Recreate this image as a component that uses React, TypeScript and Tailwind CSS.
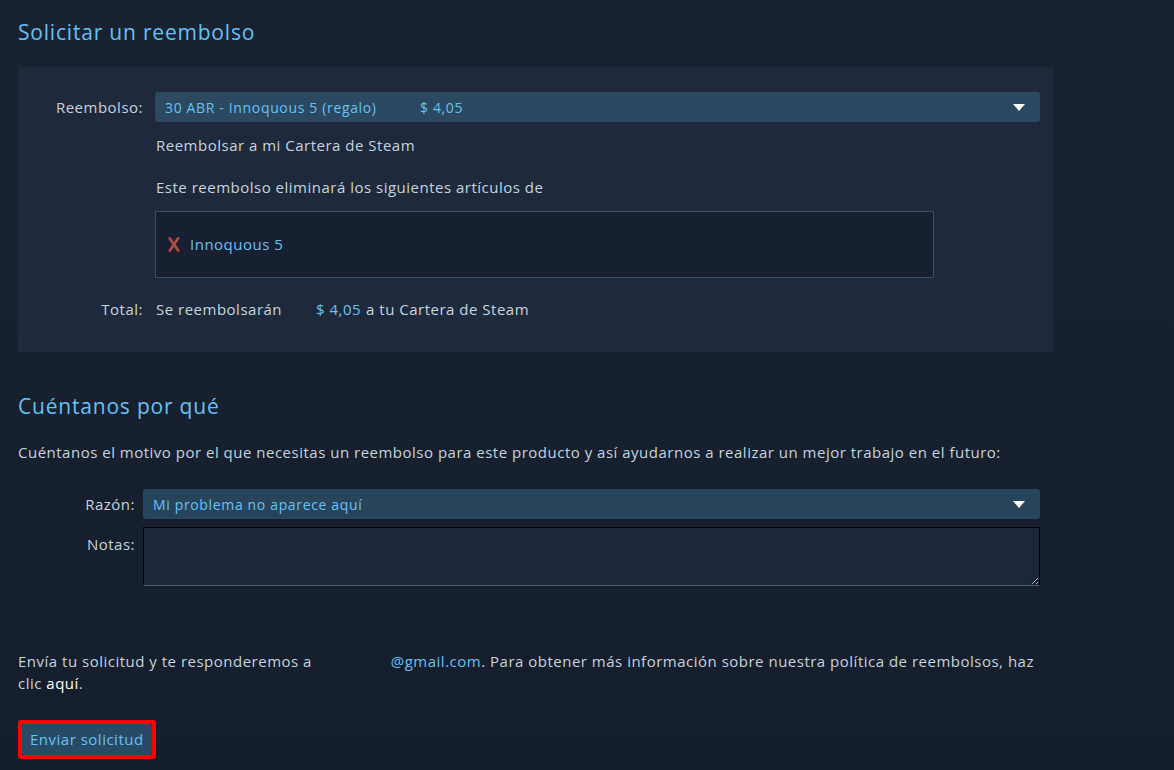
import { useState } from "react";

const FONT = "font-['Open_Sans',Arial,sans-serif]";

function Flecha() {
  return (
    <svg width="14" height="9" viewBox="0 0 14 9" className="shrink-0">
      <path d="M1 1 L13 1 L7 8 Z" fill="#ffffff" />
    </svg>
  );
}

function Cruz() {
  return (
    <svg width="12" height="15" viewBox="0 0 12 15" className="shrink-0">
      <path d="M1.8 1.5 L10.2 13.5 M10 1.5 L1.8 13.5" stroke="#b04a46" strokeWidth="2.8" strokeLinecap="round" />
    </svg>
  );
}

export default function App() {
  const [notas, setNotas] = useState("");

  return (
    <div className={`min-h-[770px] w-full bg-[#172130] bg-gradient-to-b from-[#182231] to-[#151e2c] text-[#c6d4df] tracking-[0.5px] ${FONT}`}>
      <div className="w-[1053px] pl-[18px] pt-[20px] pb-[12px]">
        {/* SOLICITAR UN REEMBOLSO */}
        <h2 className="text-[21px] leading-[24px] tracking-[0.8px] text-[#67c1f5] font-normal">Solicitar un reembolso</h2>

        <div className="mt-[23px] bg-[#1e2a3b] pt-[25px] pb-[33px] pr-[13px]">
          {/* Fila: Reembolso */}
          <div className="flex items-center">
            <div className="w-[125px] text-right text-[15px] text-[#c6d4df]">Reembolso:</div>
            <div className="ml-[12px] flex h-[30px] flex-1 items-center justify-between rounded-[3px] bg-[#2b4960] pl-[10px] pr-[14px] text-[14px] tracking-[0.65px] text-[#67c1f5]">
              <div className="flex">
                <span className="w-[255px]">30 ABR - Innoquous 5 (regalo)</span>
                <span>$ 4,05</span>
              </div>
              <Flecha />
            </div>
          </div>

          <div className="ml-[138px] mt-[13px] text-[15px] leading-[20px]">Reembolsar a mi Cartera de Steam</div>
          <div className="ml-[138px] mt-[22px] text-[15px] leading-[20px]">Este reembolso eliminará los siguientes artículos de</div>

          {/* Lista de artículos */}
          <div className="ml-[137px] mt-[14px] flex h-[67px] w-[779px] items-center gap-[10px] border border-[#34506e] bg-[#172031] pl-[12px]">
            <Cruz />
            <span className="text-[15px] text-[#67c1f5]">Innoquous 5</span>
          </div>

          {/* Total */}
          <div className="mt-[21px] flex items-center text-[15px] leading-[20px]">
            <div className="w-[125px] text-right">Total:</div>
            <div className="ml-[13px] w-[160px]">Se reembolsarán</div>
            <span className="text-[#67c1f5]">$ 4,05</span>
            <span className="ml-[5px]">a tu Cartera de Steam</span>
          </div>
        </div>

        {/* CUÉNTANOS POR QUÉ */}
        <h2 className="mt-[42px] text-[21px] leading-[24px] tracking-[0.8px] text-[#67c1f5] font-normal">Cuéntanos por qué</h2>
        <p className="mt-[23px] text-[15px] leading-[22px]">
          Cuéntanos el motivo por el que necesitas un reembolso para este producto y así ayudarnos a realizar un mejor trabajo en el futuro:
        </p>

        <div className="mt-[26px] flex items-center pr-[13px]">
          <div className="w-[117px] text-right text-[15px]">Razón:</div>
          <div className="ml-[8px] flex h-[30px] flex-1 items-center justify-between rounded-[3px] bg-[#28445a] pl-[10px] pr-[14px] text-[14px] tracking-[0.65px] text-[#67c1f5]">
            <span>Mi problema no aparece aquí</span>
            <Flecha />
          </div>
        </div>

        <div className="mt-[8px] flex pr-[13px]">
          <div className="w-[117px] pt-[6px] text-right text-[15px]">Notas:</div>
          <textarea
            value={notas}
            onChange={(e) => setNotas(e.target.value)}
            className="ml-[8px] h-[59px] flex-1 resize-y border border-black border-b-[#4b5a6a] bg-[#1c2839] text-[14px] text-[#c6d4df] outline-none"
          />
        </div>

        {/* Pie */}
        <p className="mt-[64px] pr-[12px] text-[15px] leading-[22px]">
          Envía tu solicitud y te responderemos a <span className="inline-block w-[70px]"></span>{" "}
          <span className="text-[#67c1f5]">@gmail.com</span>. Para obtener más información sobre nuestra política de reembolsos, haz clic{" "}
          <span className="text-white">aquí</span>.
        </p>

        <div className="mt-[26px] inline-block rounded-[3px] border-[4px] border-[#ff0000]">
          <button className="rounded-[2px] bg-[#274a66] px-[8px] py-[4px] text-[15px] leading-[23px] text-[#67c1f5]">
            Enviar solicitud
          </button>
        </div>
      </div>
    </div>
  );
}
